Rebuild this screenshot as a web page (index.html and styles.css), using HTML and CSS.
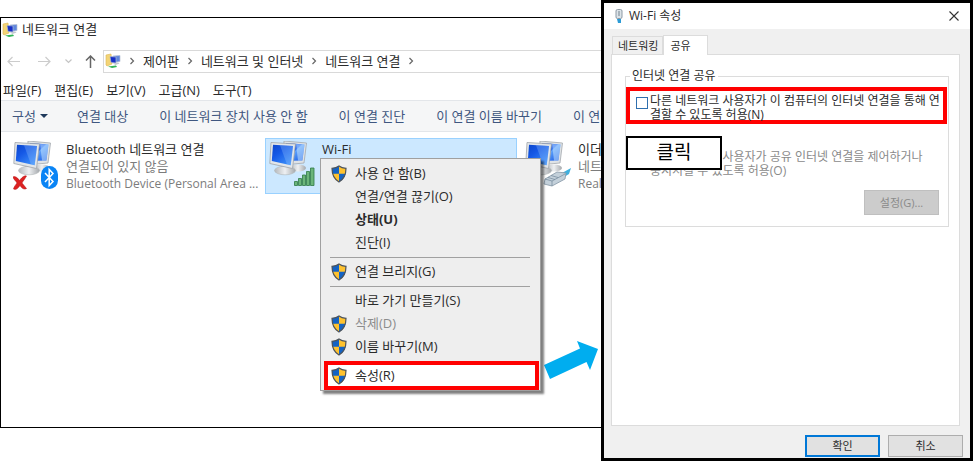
FILE: index.html
```html
<!DOCTYPE html>
<html lang="ko">
<head>
<meta charset="utf-8">
<title>네트워크 연결</title>
<link rel="stylesheet" href="styles.css">
</head>
<body>
<svg class="defs" aria-hidden="true">
  <defs>
    <linearGradient id="screen" x1="0" y1="0" x2="1" y2="1">
      <stop offset="0" stop-color="#0a3fc4"/><stop offset=".45" stop-color="#1a5ff0"/><stop offset=".5" stop-color="#5ea2fa"/><stop offset="1" stop-color="#0b4be0"/>
    </linearGradient>
    <linearGradient id="screen2" x1="0" y1="0" x2=".8" y2="1">
      <stop offset="0" stop-color="#0b46cc"/><stop offset=".4" stop-color="#1558e6"/><stop offset="1" stop-color="#3f93fb"/>
    </linearGradient>
    <linearGradient id="metal" x1="0" y1="0" x2="1" y2="0">
      <stop offset="0" stop-color="#b4b8bc"/><stop offset=".5" stop-color="#eef0f2"/><stop offset="1" stop-color="#a4a8ac"/>
    </linearGradient>
    <symbol id="pcs" viewBox="0 0 46 52">
      <ellipse cx="29" cy="27" rx="8" ry="3.500" fill="url(#metal)"/>
      <path d="M15 0 37.500 2 35 22 14 24z" fill="#dfe3e6" stroke="#a3a8ad" stroke-width=".8"/>
      <path d="M17 2 35.500 3.600 33.400 19.500 16 20z" fill="url(#screen)"/>
      <path d="M27 2.900 35.500 3.600 33.400 19.500 29 19.700z" fill="#b9dcfd" opacity=".6"/>
      <path d="M12 23h10l1 7-10 1z" fill="#a8adb1"/>
      <ellipse cx="16" cy="29.500" rx="10.500" ry="4.300" fill="url(#metal)" stroke="#b4b8bb" stroke-width=".6"/>
      <path d="M2 1.500 26.500 3 23.500 27.500 .8 22.500z" fill="#e2e6e9" stroke="#9fa4a9" stroke-width=".8"/>
      <path d="M4 3.700 24 5 21.700 24.200 2.800 20z" fill="url(#screen2)"/>
      <path d="M11 4.200 24 5 21.700 24.200 18 23.400z" fill="#9cc6fb" opacity=".3"/>
    </symbol>
    <symbol id="shield" viewBox="0 0 16 18">
      <path d="M8 1C6 2.600 3.500 3.200 1 3.300c0 6.200 1.300 10.500 7 13.700 5.700-3.200 7-7.500 7-13.700C12.500 3.200 10 2.600 8 1z" fill="#ffc22e"/>
      <path d="M8 1C6 2.600 3.500 3.200 1 3.300c0 2 .1 3.700.4 5.400H8zM8 8.700v8.300c4.100-2.300 6-5 6.600-8.300z" fill="#1463c4"/>
      <path d="M8 1C6 2.600 3.500 3.200 1 3.300c0 6.200 1.300 10.500 7 13.700 5.700-3.200 7-7.500 7-13.700C12.500 3.200 10 2.600 8 1z" fill="none" stroke="#4d545c" stroke-width="1.200"/>
    </symbol>
    <symbol id="folder" viewBox="0 0 16 16">
      <path d="M1 2l5-1 1 10-5 2-1-1z" fill="#f3d476" stroke="#dcb754" stroke-width=".6"/>
      <path d="M8 3l7-.5v6L9 9.500z" fill="#5f86dc" stroke="#b7c2d4" stroke-width=".7"/>
      <path d="M5 3.500l6 .5v6l-5-.5z" fill="#1730c8" stroke="#aebbd0" stroke-width=".7"/>
      <path d="M8 10.500l5-1 1.500 1-4 1.500z" fill="#c2c8cf"/>
      <path d="M3 13.500l8-1 1 1.500-5 1z" fill="#31b457"/>
    </symbol>
    <symbol id="chev" viewBox="0 0 6 8"><path d="M1.500 1l3 3-3 3" fill="none" stroke="#666" stroke-width="1.200"/></symbol>
  </defs>
</svg>

<main class="stage">
  <section class="explorer">
    <header class="titlebar"><svg class="ico16"><use href="#folder"/></svg><span>네트워크 연결</span></header>
    <div class="nav">
      <button class="navbtn" aria-label="뒤로"><svg width="13" height="11" viewBox="0 0 13 11"><path d="M13 5.500H1M5.500 1 1 5.500 5.500 10" fill="none" stroke="#ccc" stroke-width="1.200"/></svg></button>
      <button class="navbtn" aria-label="앞으로"><svg width="13" height="11" viewBox="0 0 13 11"><path d="M0 5.500h12M7.500 1 12 5.500 7.500 10" fill="none" stroke="#ccc" stroke-width="1.200"/></svg></button>
      <button class="navbtn small" aria-label="최근 위치"><svg width="7" height="5" viewBox="0 0 7 5"><path d="M.5.5l3 3 3-3" fill="none" stroke="#c4c4c4" stroke-width="1.200"/></svg></button>
      <button class="navbtn up" aria-label="위로"><svg width="11" height="13" viewBox="0 0 11 13"><path d="M5.500 13V1M1 5.500 5.500 1 10 5.500" fill="none" stroke="#666" stroke-width="1.500"/></svg></button>
      <nav class="crumbs">
        <svg class="ico16"><use href="#folder"/></svg>
        <svg class="chev"><use href="#chev"/></svg><a href="#">제어판</a>
        <svg class="chev"><use href="#chev"/></svg><a href="#">네트워크 및 인터넷</a>
        <svg class="chev"><use href="#chev"/></svg><a href="#">네트워크 연결</a>
        <svg class="chev"><use href="#chev"/></svg>
      </nav>
    </div>
    <div class="menubar"><button>파일(F)</button><button>편집(E)</button><button>보기(V)</button><button>고급(N)</button><button>도구(T)</button></div>
    <div class="toolbar">
      <button>구성<span class="caret"></span></button><button>연결 대상</button><button>이 네트워크 장치 사용 안 함</button><button>이 연결 진단</button><button>이 연결 이름 바꾸기</button><button>이 연결의 상태 보기</button>
    </div>
    <div class="tiles">
      <article class="tile">
        <svg class="pic" viewBox="0 0 46 52"><use href="#pcs" width="46" height="52"/>
          <path d="M0 36c2.500-1.500 5 1.500 6.500 3.500C8.500 37 11 34 13.500 35 12 38 10 40 9 42c1.500 2 3 3.500 4.500 5.500-2.500 1.500-5-.5-6.500-3C5.500 46.500 3.500 49.500.5 48c.5-2.500 2.500-4.500 3.500-6C3 40 .5 38.500 0 36z" fill="#dd2222" stroke="#b01010" stroke-width=".5"/>
          <rect x="28" y="25" width="17" height="23" rx="8.500" fill="#0a84f5"/>
          <path d="M32 32l8 8.500-3.800 4V28.500l3.800 4L32 41" fill="none" stroke="#fff" stroke-width="1.500"/>
        </svg>
        <div class="info"><strong>Bluetooth 네트워크 연결</strong><span>연결되어 있지 않음</span><span>Bluetooth Device (Personal Area ...</span></div>
      </article>
      <article class="tile selected">
        <svg class="pic" viewBox="0 0 46 52"><use href="#pcs" width="46" height="52"/>
          <g fill="#6bb57b" stroke="#2d7a45" stroke-width=".8"><path d="M25.500 40.500h3v4h-3zM29.500 37.500h3v7h-3zM33.500 34h3v10.500h-3zM37.500 30.500h3v14h-3zM41.500 27h3.500v17.500h-3.500z"/></g>
        </svg>
        <div class="info"><strong>Wi-Fi</strong></div>
        <div class="context" role="menu">
          <button role="menuitem"><svg class="shield"><use href="#shield"/></svg>사용 안 함(B)</button>
          <button role="menuitem">연결/연결 끊기(O)</button>
          <button role="menuitem" class="bold">상태(U)</button>
          <button role="menuitem">진단(I)</button>
          <hr>
          <button role="menuitem"><svg class="shield"><use href="#shield"/></svg>연결 브리지(G)</button>
          <hr>
          <button role="menuitem">바로 가기 만들기(S)</button>
          <button role="menuitem" disabled><svg class="shield"><use href="#shield"/></svg>삭제(D)</button>
          <button role="menuitem"><svg class="shield"><use href="#shield"/></svg>이름 바꾸기(M)</button>
          <hr>
          <button role="menuitem" class="marked"><svg class="shield"><use href="#shield"/></svg>속성(R)</button>
        </div>
      </article>
      <article class="tile">
        <svg class="pic" viewBox="0 0 46 52"><use href="#pcs" width="46" height="52"/>
          <path d="M37 32l9-5-2 6-5 3z" fill="#3fb0de"/>
          <path d="M20 38l12-7 9 1-1 6-13 7-8-2z" fill="#c3d0da" stroke="#8496a4" stroke-width=".8"/>
          <path d="M20 38l7 2 13-7M27 40v5M23 36.500l7 2M26 34.500l7 2" fill="none" stroke="#71879a" stroke-width=".7"/>
        </svg>
        <div class="info"><strong>이더넷</strong><span>네트워크</span><span>Realtek PCIe</span></div>
      </article>
    </div>
    <svg class="arrow" viewBox="0 0 56 40"><path d="M1 25 37 8.500 34 1 55 9 47 30 43.500 22 7 39z" fill="#00adef"/></svg>
  </section>

  <section class="dialog" role="dialog" aria-labelledby="dlg-title">
    <header class="dlg-head">
      <svg width="8" height="14" viewBox="0 0 8 14"><rect x="1" y=".5" width="6" height="9" rx="1.500" fill="#dce3e8" stroke="#8e9aa5"/><path d="M4 2v5" stroke="#75838f"/><path d="M2 10h4v4H3z" fill="#2c9bd6"/></svg>
      <h1 id="dlg-title">Wi-Fi 속성</h1>
      <button class="close" aria-label="닫기"><svg width="10" height="10" viewBox="0 0 10 10"><path d="M.5.5l9 9M9.500.5l-9 9" stroke="#333" stroke-width="1.100"/></svg></button>
    </header>
    <div class="tabs" role="tablist"><button role="tab">네트워킹</button><button role="tab" aria-selected="true" class="on">공유</button></div>
    <div class="panel">
      <fieldset>
        <legend>인터넷 연결 공유</legend>
        <div class="check marked-box"><input type="checkbox" id="share"><label for="share">다른 네트워크 사용자가 이 컴퓨터의 인터넷 연결을 통해 연<br>결할 수 있도록 허용(N)</label></div>
        <div class="check off"><input type="checkbox" id="control" disabled><label for="control">다른 네트워크 사용자가 공유 인터넷 연결을 제어하거나<br>중지시킬 수 있도록 허용(O)</label><span class="callout">클릭</span></div>
        <button class="btn settings" disabled>설정(G)...</button>
      </fieldset>
    </div>
    <footer><button class="btn primary">확인</button><button class="btn">취소</button></footer>
  </section>
</main>
</body>
</html>
```

FILE: styles.css
```css
* { box-sizing: border-box; }
body {
  margin: 0;
  background: #fff;
  color: #2b2b2b;
  font: 13px/17px "Open Sans", "Noto Sans CJK KR", sans-serif;
}
button {
  margin: 0;
  padding: 0;
  border: 0;
  background: none;
  color: inherit;
  font: inherit;
  white-space: nowrap;
}
a { color: inherit; text-decoration: none; }
svg { flex: none; display: block; }
.defs { position: absolute; width: 0; height: 0; }
.ico16 { width: 16px; height: 16px; }

.stage { display: flex; min-height: 100vh; }

.explorer {
  position: relative;
  flex: 1;
  min-width: 0;
  margin: 17px 0 33px;
  border: 1px solid #000;
  border-right: 0;
  overflow: hidden;
}
.titlebar { display: flex; align-items: center; gap: 4px; height: 23px; padding-left: 1px; }
.nav { display: flex; align-items: center; height: 40px; padding-left: 6px; }
.navbtn { display: flex; width: 13px; margin-right: 18px; }
.navbtn.small { width: 7px; margin: 0 13px 0 -4px; }
.navbtn.up { width: 11px; margin-right: 7px; }
.crumbs {
  flex: 1;
  display: flex;
  align-items: center;
  gap: 8px;
  height: 23px;
  padding-left: 1px;
  border: 1px solid #d9d9d9;
  border-right: 0;
  white-space: nowrap;
}
.chev { width: 6px; height: 8px; }
.menubar { display: flex; gap: 13px; height: 19px; padding-left: 2px; }
.toolbar {
  display: flex;
  gap: 31px;
  height: 32px;
  padding-left: 11px;
  border: solid #e3e6ea;
  border-width: 1px 0;
  background: #f5f6f7;
  color: #3f5780;
}
.caret {
  display: inline-block;
  margin: 0 -2px 3px 4px;
  border: solid transparent;
  border-width: 4px 4px 0;
  border-top-color: #1e395b;
}
.tiles {
  display: grid;
  grid-template-columns: repeat(3, 252px);
  gap: 4px;
  padding: 6px 8px;
}
.tile {
  position: relative;
  display: flex;
  gap: 7px;
  height: 56px;
  padding-left: 3px;
  border: 1px solid transparent;
}
.tile.selected { background: #cce8ff; border-color: #99d1ff; }
.pic { width: 46px; height: 52px; margin-top: 2px; }
.info { display: flex; flex-direction: column; padding-top: 2px; color: #7c7c7c; white-space: nowrap; }
.info strong { color: #2b2b2b; font-weight: 400; }
.info span:last-child:not(:first-child) { font-size: 12px; }

.context {
  position: absolute;
  top: 19px;
  left: 54px;
  width: 221px;
  padding: 3px 0;
  border: 1px solid #a0a0a0;
  background: #eee;
  box-shadow: 3px 3px 2px rgba(0, 0, 0, .5);
  z-index: 1;
}
.context button {
  position: relative;
  display: flex;
  align-items: center;
  width: 100%;
  height: 23px;
  padding-left: 34px;
}
.context .bold { font-weight: 700; }
.context button:disabled { color: #8c8c8c; }
.context hr { height: 1px; margin: 3px 10px 2px 9px; border: 0; background: #a0a0a0; }
.shield { width: 16px; height: 18px; margin: 0 8px 0 -24px; }
.context .marked { z-index: 0; }
.context .marked::before {
  content: "";
  position: absolute;
  inset: -3px 1px -3px 3px;
  border: 4px solid #f00;
  background: #fff;
  z-index: -1;
}
.arrow { position: absolute; right: 2px; bottom: 47px; width: 56px; height: 40px; }

.dialog {
  flex: 0 0 372px;
  display: flex;
  flex-direction: column;
  border: 3px solid #000;
  background: #f0f0f0;
  font-size: 12px;
  line-height: 14px;
}
.dlg-head { display: flex; align-items: center; gap: 6px; height: 26px; padding: 0 11px; background: #fff; }
.dlg-head h1 { flex: 1; margin: 0; font-size: 12px; font-weight: 400; }
.tabs { display: flex; align-items: flex-end; height: 25px; padding-left: 8px; font-size: 11px; }
.tabs button { height: 18px; padding: 0 4px 0 5px; border: 1px solid #dcdcdc; border-bottom: 0; }
.tabs .on { height: 20px; width: 45px; padding: 0 6px; margin-bottom: -1px; background: #fff; text-align: left; z-index: 1; }
.panel { flex: 1; margin: 0 10px 0 7px; padding: 14px 10px 0 13px; border: 1px solid #dcdcdc; background: #fff; }
fieldset { min-width: 0; margin: 0; padding: 4px 1px 11px 0; border: 1px solid #dcdcdc; }
legend { margin-left: 4px; padding: 0 2px; }
.check { position: relative; display: flex; gap: 2px; padding: 3px 0 0 6px; white-space: nowrap; }
.check input { appearance: none; flex: none; width: 12px; height: 12px; margin: 3px 0 0; border: 1px solid #2f6fae; background: #fff; }
.marked-box { height: 37px; border: 4px solid #f00; }
.off { margin-top: 23px; padding-left: 10px; color: #8a8a8a; }
.off input { border-color: #ccc; }
.callout {
  position: absolute;
  top: -11px;
  left: 0;
  width: 96px;
  height: 34px;
  border: 2px solid #000;
  background: #fff;
  color: #000;
  font-size: 19px;
  line-height: 28px;
  text-align: center;
}
.btn { width: 75px; height: 22px; border: 1px solid #adadad; background: #e1e1e1; font-size: 11px; }
.settings { display: block; height: 25px; margin: 12px 8px 0 auto; border-color: #bfbfbf; background: #ccc; color: #8a8a8a; }
.primary { border: 2px solid #0078d7; }
footer { display: flex; justify-content: flex-end; gap: 8px; padding: 9px 7px 1px; }
```
